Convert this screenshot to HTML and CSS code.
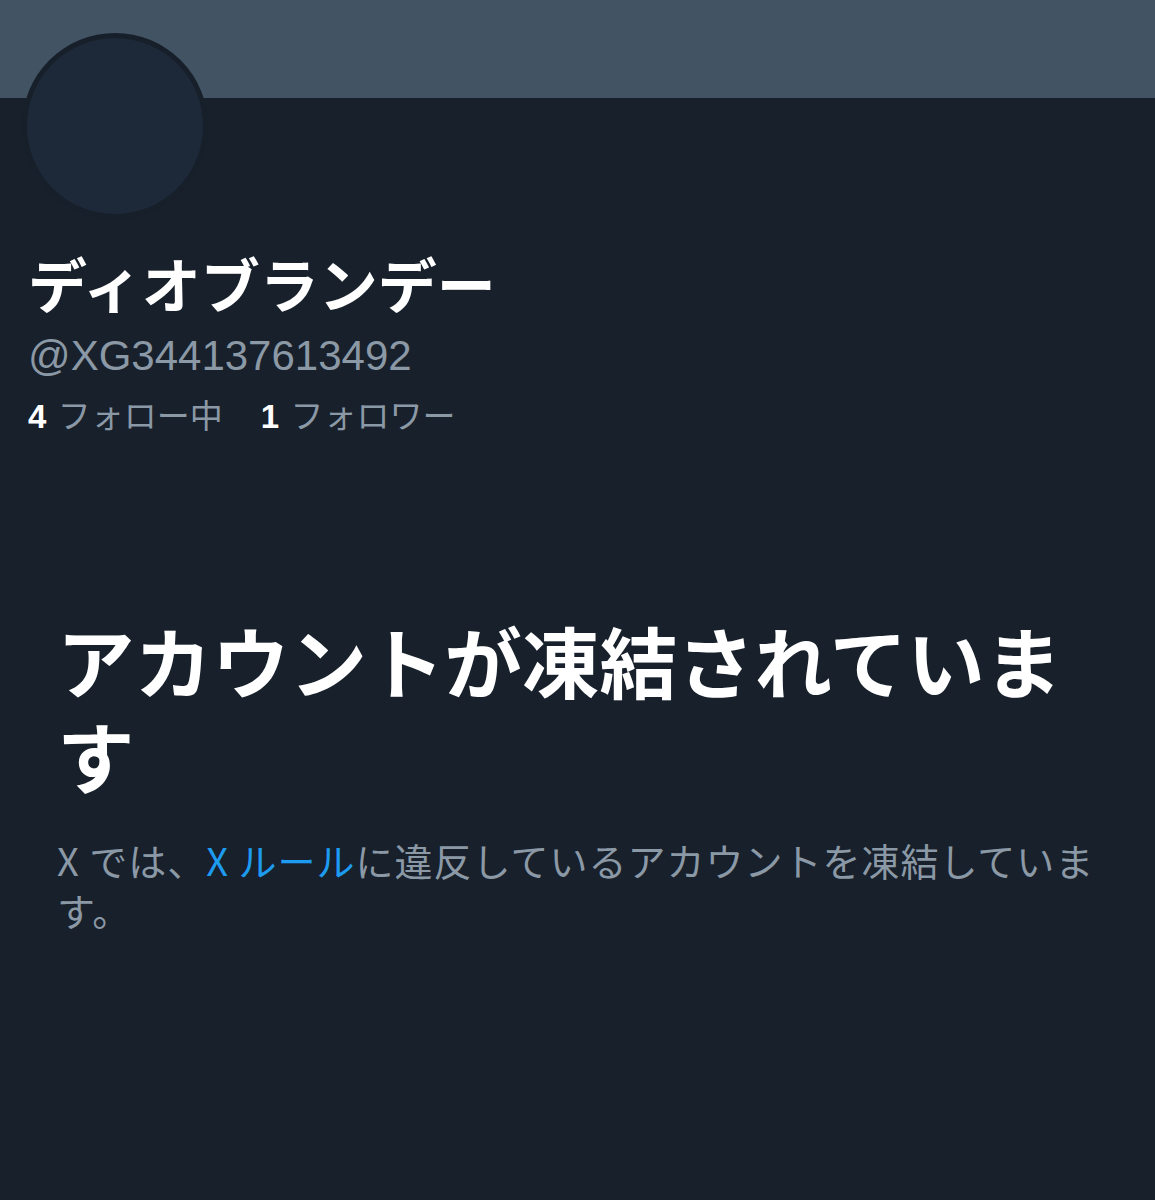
FILE: index.html
```html
<!DOCTYPE html>
<html lang="ja">
<head>
<meta charset="utf-8">
<link rel="stylesheet" href="styles.css">
</head>
<body>
<div class="page">
  <div class="banner"></div>
  <div class="profile">
    <div class="avatar"><div class="avatar-inner"></div></div>
    <h1 class="name">ディオブランデー</h1>
    <div class="handle">@XG344137613492</div>
    <div class="stats">
      <span class="stat"><b>4</b> フォロー中</span>
      <span class="stat"><b>1</b> フォロワー</span>
    </div>
  </div>
  <div class="notice">
    <h2 class="title">アカウントが凍結されています</h2>
    <p class="desc">X では、<span class="link">X ルール</span>に違反しているアカウントを凍結しています。</p>
  </div>
</div>
</body>
</html>
```
FILE: styles.css
```css
html, body {
  margin: 0;
  padding: 0;
  background: #17202b;
}
body {
  font-family: "Noto Sans CJK JP", "Noto Sans", sans-serif;
  color: #ffffff;
}
.page {
  width: 1155px;
  min-height: 1200px;
  background: #17202b;
}
.banner {
  height: 98px;
  background: #425364;
}
.profile {
  padding: 0 28px;
}
.avatar {
  width: 186px;
  height: 186px;
  margin-top: -65px;
  margin-left: -6px;
  border-radius: 50%;
  background: #17202a;
  display: flex;
  align-items: center;
  justify-content: center;
}
.avatar-inner {
  width: 176px;
  height: 176px;
  border-radius: 50%;
  background: #1d2939;
}
.name {
  margin: 29px 0 0;
  font-size: 59px;
  line-height: 70px;
  font-weight: 700;
}
.handle {
  margin-top: 13px;
  font-family: "Liberation Sans", "Noto Sans CJK JP", sans-serif;
  font-size: 42px;
  line-height: 50px;
  color: #8b98a5;
}
.stats {
  margin-top: 11px;
  display: flex;
  gap: 38px;
  font-size: 33px;
  line-height: 44px;
  color: #8b98a5;
}
.stat b {
  font-family: "Liberation Sans", sans-serif;
  font-weight: 700;
  color: #ffffff;
  margin-right: 4px;
}
.notice {
  width: 1050px;
  padding-left: 57px;
}
.title {
  margin: 173px 0 0;
  font-size: 77.5px;
  line-height: 95px;
  font-weight: 700;
}
.desc {
  margin: 33px 0 0;
  font-size: 38px;
  line-height: 50px;
  letter-spacing: 1px;
  color: #8b98a5;
}
.link {
  color: #1d9bf0;
}
```
